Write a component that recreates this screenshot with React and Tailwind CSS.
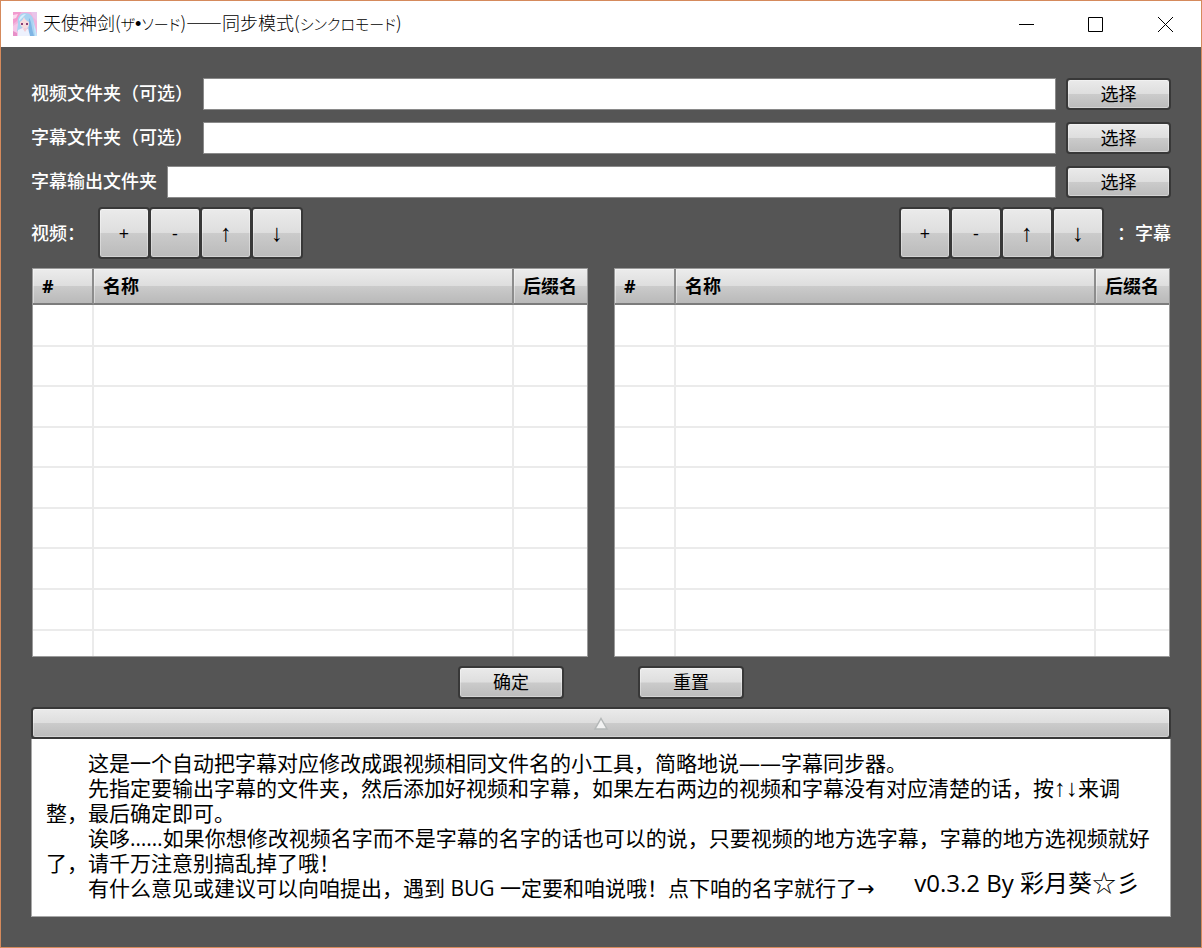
function GlossButton({ className = "", children, ...rest }) {
  return (
    <button
      type="button"
      className={`flex items-center justify-center rounded-[4px] border-2 border-[#383838] bg-[linear-gradient(to_bottom,#ececec_0%,#dedede_49%,#cbcbcb_51%,#b9b9b9_100%)] bg-origin-border text-black shadow-[inset_0_0_0_1px_rgba(255,255,255,0.35)] ${className}`}
      {...rest}
    >
      {children}
    </button>
  );
}

function PathRow({ id, label }) {
  return (
    <div className="flex h-8 items-center">
      <label htmlFor={id} className="mr-[10px] shrink-0 pb-[2px] text-[18px] leading-6 font-medium text-white">
        {label}
      </label>
      <input id={id} type="text" className="h-8 min-w-0 flex-1 border border-[#8a8a8a] bg-white px-2 text-[18px] text-black outline-none" />
      <GlossButton aria-label={`选择${label}`} className="ml-[10px] h-8 w-[105px] text-[18px]">选择</GlossButton>
    </div>
  );
}

function ToolButtons({ name }) {
  const items = [
    ["+", "添加"],
    ["-", "移除"],
    ["↑", "上移"],
    ["↓", "下移"],
  ];
  return (
    <div className="flex">
      {items.map(([glyph, title], i) => (
        <GlossButton
          key={glyph}
          aria-label={name + title}
          className={`h-[52px] w-[52px] ${i > 0 ? "-ml-px" : ""} ${i > 1 ? "font-['Liberation_Sans',sans-serif] text-[24px] leading-6" : "text-[18px] leading-6"}`}
        >
          {glyph}
        </GlossButton>
      ))}
    </div>
  );
}

const rowHeights = ["h-[42px]", "h-[40px]", "h-[41px]", "h-[40px]", "h-[41px]", "h-[40px]", "h-[41px]", "h-[41px]", "h-[25px]"];

function FileTable({ name }) {
  const head =
    "border-b-2 border-b-[#7c7c7c] bg-[linear-gradient(to_bottom,#ececec_0%,#dedede_49%,#cbcbcb_51%,#b9b9b9_100%)] px-[9px] text-left text-[18px] leading-6 font-bold text-black shadow-[inset_1px_1px_0_rgba(255,255,255,0.4)]";
  return (
    <table aria-label={name} className="min-w-0 flex-1 table-fixed border-separate border-spacing-0 border border-[#9a9a9a] bg-white">
      <thead>
        <tr className="h-9">
          <th className={`w-[61px] border-r-2 border-r-[#8c8c8c] ${head}`}>#</th>
          <th className={`border-r-2 border-r-[#8c8c8c] ${head}`}>名称</th>
          <th className={`w-[73px] ${head}`}>后缀名</th>
        </tr>
      </thead>
      <tbody>
        {rowHeights.map((h, i) => {
          const line = i < rowHeights.length - 1 ? "border-b-2 border-b-[#ebebeb]" : "";
          return (
            <tr key={i} className={h}>
              <td className={`border-r-2 border-r-[#ebebeb] p-0 ${line}`} />
              <td className={`border-r-2 border-r-[#ebebeb] p-0 ${line}`} />
              <td className={`p-0 ${line}`} />
            </tr>
          );
        })}
      </tbody>
    </table>
  );
}

function Kana({ children }) {
  return <span lang="ja" className="font-['Noto_Sans_CJK_JP',sans-serif] text-[15px]">{children}</span>;
}

function AppIcon() {
  return (
    <svg width="24" height="24" viewBox="0 0 24 24" aria-hidden="true">
      <rect width="24" height="24" fill="#f0b4dd" />
      <path d="M0 0h8L4 9 0 12z" fill="#f29bcf" />
      <path d="M0 3l5-1-2 4-3 1z" fill="#fbd9ee" />
      <path d="M18 0h6v9l-4-4z" fill="#e9c5ea" />
      <path d="M0 14l5-3 2 13H0z" fill="#f5c6e8" />
      <path d="M0 19l4 2v3H0z" fill="#e78fc8" />
      <path d="M5 12C4 5 7 1 12 1s8 3 9 9l3 14h-8l-1-8H8l-2 4-2-1z" fill="#a9d3f1" />
      <path d="M16 6c3 4 2 9 5 18h-4c-2-6-1-12-1-18z" fill="#7fb5e4" />
      <path d="M20 9l3 9 1 6h-2z" fill="#c3e4fa" />
      <path d="M7 10c2-1 3-3 4-5 1 3 3 4 5 5v3c-1 3-3 4-4 4s-4-2-5-5z" fill="#f8dbdd" />
      <path d="M8 11h2v2H8zM13 11h2v2h-2z" fill="#8a3f77" />
      <path d="M5 18l5-2 5 1 2 7H5z" fill="#edf1fd" />
      <path d="M10 17l2 3 2-3-1-1h-2z" fill="#f3cdd6" />
      <path d="M6 9c0-4 3-7 7-7-2 2-4 4-7 7z" fill="#d8f0fc" />
    </svg>
  );
}

export default function App() {
  return (
    <div lang="zh-CN" className="flex min-h-screen flex-col border border-[#d58a5c] bg-[#555555] font-['Open_Sans','Noto_Sans_CJK_SC',sans-serif]">
      <header className="flex h-[46px] items-center bg-white pl-3">
        <AppIcon />
        <h1 className="ml-[6px] flex-1 pb-[2px] font-['Noto_Sans_CJK_SC',sans-serif] text-[18px] leading-6 font-light text-black [font-feature-settings:'palt']">
          天使神剑(<Kana>ザ</Kana>
          <span className="font-['Liberation_Sans',sans-serif]">•</span>
          <Kana>ソード</Kana>)——同步模式(<Kana>シンクロモード</Kana>)
        </h1>
        <div className="flex h-full">
          <button type="button" aria-label="最小化" className="flex w-[70px] items-center justify-center">
            <svg width="15" height="15" viewBox="0 0 15 15"><path d="M0 7.5h15" stroke="#000" /></svg>
          </button>
          <button type="button" aria-label="最大化" className="flex w-[69px] items-center justify-center">
            <svg width="15" height="15" viewBox="0 0 15 15"><path d="M.5.5h14v14H.5z" stroke="#000" fill="none" /></svg>
          </button>
          <button type="button" aria-label="关闭" className="flex w-[71px] items-center justify-center">
            <svg width="15" height="15" viewBox="0 0 15 15"><path d="M0 0l15 15M15 0L0 15" stroke="#000" /></svg>
          </button>
        </div>
      </header>

      <main className="px-[30px] pt-[31px] pb-[30px]">
        <form className="flex flex-col gap-3">
          <PathRow id="video-dir" label="视频文件夹（可选）" />
          <PathRow id="sub-dir" label="字幕文件夹（可选）" />
          <PathRow id="out-dir" label="字幕输出文件夹" />
        </form>

        <div className="mt-[9px] flex items-center justify-between text-[18px] font-medium text-white">
          <div className="flex items-center gap-[13px]">
            <span>视频：</span>
            <ToolButtons name="视频" />
          </div>
          <div className="flex items-center gap-[13px]">
            <ToolButtons name="字幕" />
            <span>：字幕</span>
          </div>
        </div>

        <div className="mt-[9px] flex gap-[26px] px-px">
          <FileTable name="视频" />
          <FileTable name="字幕" />
        </div>

        <div className="mt-[9px] flex justify-center gap-[74px]">
          <GlossButton className="h-[33px] w-[106px] text-[18px]">确定</GlossButton>
          <GlossButton className="h-[33px] w-[106px] text-[18px]">重置</GlossButton>
        </div>

        <GlossButton aria-label="收起说明" className="mt-2 h-8 w-full">
          <svg width="16" height="13" viewBox="0 0 16 13"><path d="M8 1.5L14 12H2z" fill="#f2f2f2" stroke="#b4b8b8" strokeWidth="1.5" /></svg>
        </GlossButton>

        <section className="border border-t-0 border-[#a8a8a8] bg-white px-[14px] pt-3 pb-[15px] text-[21px] leading-[25px] text-black">
          <p className="indent-[42px]">这是一个自动把字幕对应修改成跟视频相同文件名的小工具，简略地说——字幕同步器。</p>
          <p className="indent-[42px]">
            先指定要输出字幕的文件夹，然后添加好视频和字幕，如果左右两边的视频和字幕没有对应清楚的话，按
            <span className="font-['Liberation_Sans',sans-serif] text-[24px] leading-none">↑↓</span>来调整，最后确定即可。
          </p>
          <p className="indent-[42px]">
            诶哆……如果你想修改视频名字而不是字幕的名字的话也可以的说，只要视频的地方选字幕，字幕的地方选视频就好了，请千万注意别搞乱掉了哦！
          </p>
          <div className="flex justify-between pr-4">
            <p className="indent-[42px]">
              有什么意见或建议可以向咱提出，遇到 BUG 一定要和咱说哦！点下咱的名字就行了
              <span className="font-['DejaVu_Sans',sans-serif] leading-none">→</span>
            </p>
            <a href="#author" className="-mt-[6px] pb-[6px] text-[24px] leading-[25px] text-black">
              v0.3.2 By 彩月葵☆彡
            </a>
          </div>
        </section>
      </main>
    </div>
  );
}
